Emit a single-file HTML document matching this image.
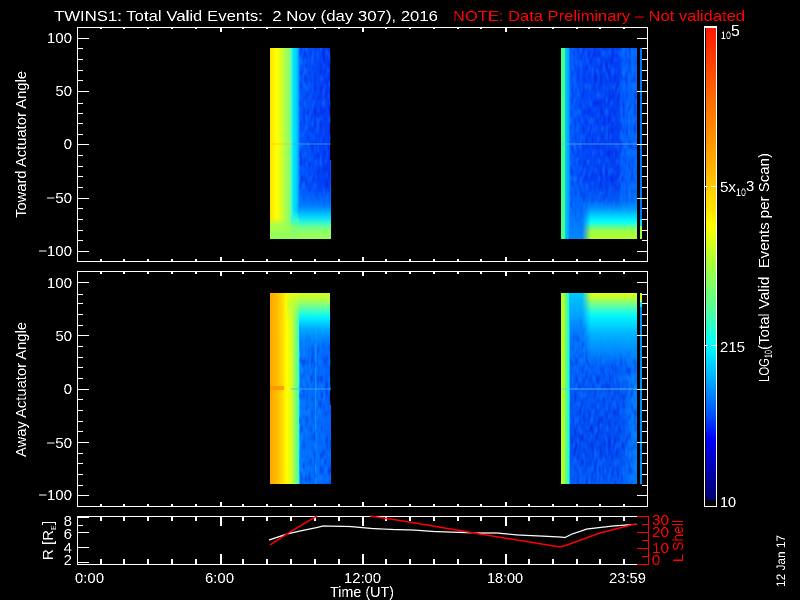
<!DOCTYPE html>
<html>
<head>
<meta charset="utf-8">
<style>
html,body{margin:0;padding:0;background:#000;width:800px;height:600px;overflow:hidden}
svg{display:block}
text{font-family:"Liberation Sans",sans-serif;fill:#fff;font-size:15px}
.r{fill:#f00}
.s{font-size:11px}
</style>
</head>
<body>
<svg width="800" height="600" viewBox="0 0 800 600" xmlns="http://www.w3.org/2000/svg">
<defs>
<filter id="aa" x="0" y="0" width="800" height="600" filterUnits="userSpaceOnUse" color-interpolation-filters="sRGB">
<feComponentTransfer><feFuncA type="discrete" tableValues="0 1"/></feComponentTransfer>
</filter>
<filter id="nd" x="0" y="0" width="1" height="1" color-interpolation-filters="sRGB">
<feTurbulence type="fractalNoise" baseFrequency=".35 .12" numOctaves="1" seed="4"/>
<feColorMatrix values="0 0 0 0 0  0 0 0 0 0  0 0 0 0 .8  1.2 0 0 0 -.55"/>
</filter>
<filter id="nl" x="0" y="0" width="1" height="1" color-interpolation-filters="sRGB">
<feTurbulence type="fractalNoise" baseFrequency=".35 .12" numOctaves="1" seed="11"/>
<feColorMatrix values="0 0 0 0 .1  0 0 0 0 .6  0 0 0 0 1  1 0 0 0 -.47"/>
</filter>

<linearGradient id="a1" x1="0" x2="1" y1="0" y2="0">
<stop offset="0" stop-color="#ffe000"/><stop offset=".05" stop-color="#ffee00"/><stop offset=".09" stop-color="#ffff00"/><stop offset=".15" stop-color="#f0ff10"/><stop offset=".25" stop-color="#b0ff48"/><stop offset=".33" stop-color="#80ff80"/><stop offset=".367" stop-color="#40ffc0"/><stop offset=".38" stop-color="#00e8ff"/><stop offset=".45" stop-color="#00c8ff"/><stop offset=".483" stop-color="#0090ff"/><stop offset=".5" stop-color="#0058ff"/><stop offset=".75" stop-color="#0048fa"/><stop offset="1" stop-color="#0038f4"/>
</linearGradient>
<linearGradient id="a1v" x1="0" x2="0" y1="0" y2="1">
<stop offset="0" stop-color="#0070ff" stop-opacity="0"/><stop offset=".37" stop-color="#0080ff" stop-opacity=".85"/><stop offset=".555" stop-color="#00c8ff"/><stop offset=".667" stop-color="#20f0e8"/><stop offset=".76" stop-color="#60ffa0"/><stop offset=".87" stop-color="#90ff60"/><stop offset="1" stop-color="#98ff60"/>
</linearGradient>
<linearGradient id="a1c" x1="0" x2="0" y1="0" y2="1">
<stop offset="0" stop-color="#30ffd0" stop-opacity="0"/><stop offset=".35" stop-color="#30ffd0"/><stop offset=".62" stop-color="#80ff70"/><stop offset="1" stop-color="#90ff60"/>
</linearGradient>
<linearGradient id="a1l" x1="0" x2="0" y1="0" y2="1">
<stop offset="0" stop-color="#90ff60" stop-opacity="0"/><stop offset=".35" stop-color="#a0ff50" stop-opacity=".9"/><stop offset="1" stop-color="#90ff60"/>
</linearGradient>

<linearGradient id="a2" x1="0" x2="1" y1="0" y2="0">
<stop offset="0" stop-color="#40ff90"/><stop offset=".052" stop-color="#40ff90"/><stop offset=".06" stop-color="#00b8ff"/><stop offset=".095" stop-color="#00b0ff"/><stop offset=".125" stop-color="#0060ff"/><stop offset=".3" stop-color="#0048fa"/><stop offset=".76" stop-color="#0040f4"/><stop offset=".8" stop-color="#0060ff"/><stop offset="1" stop-color="#0068ff"/>
</linearGradient>
<linearGradient id="a2w" x1="0" x2="0" y1="0" y2="1">
<stop offset="0" stop-color="#0080ff" stop-opacity="0"/><stop offset="1" stop-color="#0088ff"/>
</linearGradient>
<linearGradient id="a2v" x1="0" x2="0" y1="0" y2="1">
<stop offset="0" stop-color="#00a0ff" stop-opacity="0"/><stop offset=".4" stop-color="#00d0ff"/><stop offset=".55" stop-color="#00ffff"/><stop offset=".67" stop-color="#50ffa8"/><stop offset=".8" stop-color="#a0ff40"/><stop offset="1" stop-color="#b0ff30"/>
</linearGradient>

<linearGradient id="b1" x1="0" x2="1" y1="0" y2="0">
<stop offset="0" stop-color="#ffa800"/><stop offset=".1" stop-color="#ffb800"/><stop offset=".2" stop-color="#ffd800"/><stop offset=".28" stop-color="#ffff00"/><stop offset=".36" stop-color="#d8ff20"/><stop offset=".4" stop-color="#a0ff50"/><stop offset=".45" stop-color="#60ff90"/><stop offset=".48" stop-color="#40ffb0"/><stop offset=".49" stop-color="#00c8ff"/><stop offset=".505" stop-color="#0078ff"/><stop offset=".75" stop-color="#0068ff"/><stop offset=".76" stop-color="#00a8ff"/><stop offset=".78" stop-color="#0070ff"/><stop offset="1" stop-color="#0060ff"/>
</linearGradient>
<linearGradient id="b1v" x1="0" x2="0" y1="0" y2="1">
<stop offset="0" stop-color="#d8ff20"/><stop offset=".08" stop-color="#c0ff38"/><stop offset=".2" stop-color="#80ff80"/><stop offset=".32" stop-color="#30ffd0"/><stop offset=".42" stop-color="#00f0ff"/><stop offset=".6" stop-color="#00b0ff" stop-opacity=".9"/><stop offset=".8" stop-color="#0090ff" stop-opacity=".6"/><stop offset="1" stop-color="#0080ff" stop-opacity="0"/>
</linearGradient>
<linearGradient id="b1c" x1="0" x2="0" y1="0" y2="1">
<stop offset="0" stop-color="#e8ff10"/><stop offset=".4" stop-color="#c0ff38" stop-opacity=".7"/><stop offset="1" stop-color="#a0ff50" stop-opacity="0"/>
</linearGradient>

<linearGradient id="b2" x1="0" x2="1" y1="0" y2="0">
<stop offset="0" stop-color="#b8ff28"/><stop offset=".05" stop-color="#b0ff30"/><stop offset=".06" stop-color="#50ff90"/><stop offset=".1" stop-color="#30ffb0"/><stop offset=".11" stop-color="#00d0ff"/><stop offset=".125" stop-color="#0078ff"/><stop offset=".8" stop-color="#0070ff"/><stop offset="1" stop-color="#0080ff"/>
</linearGradient>
<linearGradient id="b2d" x1="0" x2="0" y1="0" y2="1">
<stop offset="0" stop-color="#0040f0" stop-opacity="0"/><stop offset=".3" stop-color="#0040f0" stop-opacity=".15"/><stop offset=".48" stop-color="#0040f0" stop-opacity=".5"/><stop offset=".8" stop-color="#0040f0" stop-opacity=".8"/><stop offset="1" stop-color="#0040f0" stop-opacity=".45"/>
</linearGradient>
<linearGradient id="b2h" x1="0" x2="1" y1="0" y2="0">
<stop offset="0" stop-color="#fff"/><stop offset=".72" stop-color="#fff"/><stop offset=".95" stop-color="#fff" stop-opacity="0"/>
</linearGradient>
<mask id="b2m" maskUnits="userSpaceOnUse" x="570" y="293" width="67" height="191"><rect x="570" y="293" width="67" height="191" fill="url(#b2h)"/></mask>
<linearGradient id="fd" x1="0" x2="1" y1="0" y2="0">
<stop offset="0" stop-color="#fff" stop-opacity="0"/><stop offset=".16" stop-color="#fff"/><stop offset="1" stop-color="#fff"/>
</linearGradient>
<mask id="fm" maskUnits="userSpaceOnUse" x="582" y="0" width="55" height="600"><rect x="582" y="0" width="55" height="600" fill="url(#fd)"/></mask>
<linearGradient id="b2v" x1="0" x2="0" y1="0" y2="1">
<stop offset="0" stop-color="#e0ff18"/><stop offset=".05" stop-color="#c8ff28"/><stop offset=".14" stop-color="#80ff80"/><stop offset=".24" stop-color="#30ffd0"/><stop offset=".33" stop-color="#00f4ff"/><stop offset=".55" stop-color="#00b8ff"/><stop offset=".78" stop-color="#0098ff" stop-opacity=".8"/><stop offset="1" stop-color="#0090ff" stop-opacity="0"/>
</linearGradient>
<linearGradient id="b2l" x1="0" x2="0" y1="0" y2="1">
<stop offset="0" stop-color="#00c8ff"/><stop offset=".45" stop-color="#00b0ff" stop-opacity=".8"/><stop offset="1" stop-color="#0088ff" stop-opacity="0"/>
</linearGradient>
<linearGradient id="cb" x1="0" x2="0" y1="0" y2="1">
<stop offset="0" stop-color="#ff1800"/><stop offset=".16" stop-color="#ff7000"/><stop offset=".28" stop-color="#ffa800"/><stop offset=".32" stop-color="#ffc000"/><stop offset=".39" stop-color="#ffe800"/><stop offset=".42" stop-color="#ffff00"/><stop offset=".49" stop-color="#b0ff30"/><stop offset=".6" stop-color="#50ffa0"/><stop offset=".67" stop-color="#00ffff"/><stop offset=".74" stop-color="#00b0ff"/><stop offset=".82" stop-color="#0050ff"/><stop offset=".87" stop-color="#0000f8"/><stop offset=".95" stop-color="#0000a0"/><stop offset="1" stop-color="#000070"/>
</linearGradient>
</defs>

<!-- Panel 1 left block -->
<rect x="270" y="48" width="60" height="191" fill="url(#a1)"/>
<rect x="330" y="160" width="1" height="79" fill="#0050f8"/>
<rect x="299" y="48" width="32" height="191" filter="url(#nd)"/>
<rect x="299" y="48" width="32" height="191" filter="url(#nl)"/>
<rect x="299" y="185" width="32" height="54" fill="url(#a1v)"/>
<rect x="291" y="210" width="8" height="29" fill="url(#a1c)"/>
<rect x="270" y="218" width="21" height="21" fill="url(#a1l)"/>
<rect x="270" y="143" width="21" height="2" fill="#ffc000" opacity=".35"/>
<rect x="291" y="143" width="40" height="2" fill="#40b0ff" opacity=".35"/>

<!-- Panel 1 right block -->
<rect x="561" y="48" width="76" height="191" fill="url(#a2)"/>
<rect x="570" y="48" width="67" height="191" filter="url(#nd)"/>
<rect x="570" y="48" width="67" height="191" filter="url(#nl)"/>
<rect x="570" y="180" width="67" height="59" fill="url(#a2w)"/>
<rect x="582" y="200" width="55" height="39" fill="url(#a2v)" mask="url(#fm)"/>
<rect x="561" y="143" width="76" height="2" fill="#60b0ff" opacity=".35"/>
<rect x="640" y="48" width="2" height="171" fill="#0078ff"/>
<rect x="640" y="219" width="2" height="7" fill="#00e0ff"/>
<rect x="640" y="226" width="2" height="13" fill="#a0ff40"/>

<!-- Panel 2 left block -->
<rect x="270" y="293" width="60" height="191" fill="url(#b1)"/>
<rect x="330" y="405" width="1" height="79" fill="#0060ff"/>
<rect x="299" y="293" width="32" height="191" filter="url(#nd)"/>
<rect x="299" y="293" width="32" height="191" filter="url(#nl)"/>
<rect x="299" y="293" width="31" height="60" fill="url(#b1v)"/>
<rect x="287" y="293" width="12" height="30" fill="url(#b1c)"/>
<rect x="270" y="386" width="14" height="4" fill="#ff9000" opacity=".8"/>
<rect x="291" y="388" width="40" height="2" fill="#40b0ff" opacity=".4"/>

<!-- Panel 2 right block -->
<rect x="561" y="293" width="76" height="191" fill="url(#b2)"/>
<rect x="570" y="293" width="67" height="191" fill="url(#b2d)" mask="url(#b2m)"/>
<rect x="570" y="293" width="67" height="191" filter="url(#nd)"/>
<rect x="570" y="293" width="67" height="191" filter="url(#nl)"/>
<rect x="570" y="293" width="20" height="50" fill="url(#b2l)"/>
<rect x="582" y="293" width="55" height="72" fill="url(#b2v)" mask="url(#fm)"/>
<rect x="561" y="388" width="76" height="2" fill="#60c0ff" opacity=".4"/>
<rect x="640" y="293" width="2" height="9" fill="#c0ff30"/>
<rect x="640" y="302" width="2" height="5" fill="#00e8ff"/>
<rect x="640" y="307" width="2" height="177" fill="#0090ff"/>

<!-- Frames and ticks -->
<g shape-rendering="crispEdges" stroke="#fff" stroke-width="1" fill="none">
<rect x="77.5" y="27.5" width="570" height="234"/>
<rect x="77.5" y="271.5" width="570" height="235"/>
<path d="M77.5 564.5H648M77.5 516.5H637M77.5 516V565"/>
<path d="M77 38.5h12M77 91.5h12M77 144.5h12M77 198.5h12M77 251.5h12"/>
<path d="M77 48.5h6M77 59.5h6M77 70.5h6M77 80.5h6M77 103.5h6M77 113.5h6M77 123.5h6M77 134.5h6M77 155.5h6M77 166.5h6M77 176.5h6M77 187.5h6M77 208.5h6M77 219.5h6M77 230.5h6M77 240.5h6"/>
<path d="M637 38.5h11M637 91.5h11M637 144.5h11M637 198.5h11M637 251.5h11"/>
<path d="M642 48.5h6M642 59.5h6M642 70.5h6M642 80.5h6M642 103.5h6M642 113.5h6M642 123.5h6M642 134.5h6M642 155.5h6M642 166.5h6M642 176.5h6M642 187.5h6M642 208.5h6M642 219.5h6M642 230.5h6M642 240.5h6"/>
<path d="M77 282.5h12M77 335.5h12M77 389.5h12M77 442.5h12M77 495.5h12"/>
<path d="M77 294.5h6M77 303.5h6M77 314.5h6M77 325.5h6M77 346.5h6M77 357.5h6M77 367.5h6M77 378.5h6M77 399.5h6M77 410.5h6M77 421.5h6M77 431.5h6M77 453.5h6M77 463.5h6M77 474.5h6M77 485.5h6"/>
<path d="M637 282.5h11M637 335.5h11M637 389.5h11M637 442.5h11M637 495.5h11"/>
<path d="M642 294.5h6M642 303.5h6M642 314.5h6M642 325.5h6M642 346.5h6M642 357.5h6M642 367.5h6M642 378.5h6M642 399.5h6M642 410.5h6M642 421.5h6M642 431.5h6M642 453.5h6M642 463.5h6M642 474.5h6M642 485.5h6"/>
<path d="M77 517.5h12M77 532.5h12M77 547.5h12M77 562.5h12M77 525.5h6"/>
</g>
<g shape-rendering="crispEdges" fill="#fff">
<rect x="220" y="27" width="2" height="5"/><rect x="362" y="27" width="2" height="5"/><rect x="505" y="27" width="2" height="5"/>
<rect x="220" y="257" width="2" height="5"/><rect x="362" y="257" width="2" height="5"/><rect x="505" y="257" width="2" height="5"/>
<rect x="220" y="271" width="2" height="5"/><rect x="362" y="271" width="2" height="5"/><rect x="505" y="271" width="2" height="5"/>
<rect x="220" y="502" width="2" height="5"/><rect x="362" y="502" width="2" height="5"/><rect x="505" y="502" width="2" height="5"/>
<rect x="220" y="516" width="2" height="10"/><rect x="362" y="516" width="2" height="10"/><rect x="505" y="516" width="2" height="10"/>
<rect x="220" y="554" width="2" height="10"/><rect x="362" y="554" width="2" height="10"/><rect x="505" y="554" width="2" height="10"/>
</g>
<g shape-rendering="crispEdges" stroke="#fff" stroke-width="2" fill="none">
<path d="M101 27v2M124 27v2M148 27v2M172 27v2M196 27v2M243 27v2M267 27v2M291 27v2M315 27v2M339 27v2M386 27v2M410 27v2M434 27v2M458 27v2M481 27v2M529 27v2M553 27v2M577 27v2M600 27v2M624 27v2"/>
<path d="M101 259v2M124 259v2M148 259v2M172 259v2M196 259v2M243 259v2M267 259v2M291 259v2M315 259v2M339 259v2M386 259v2M410 259v2M434 259v2M458 259v2M481 259v2M529 259v2M553 259v2M577 259v2M600 259v2M624 259v2"/>
<path d="M101 271v3M124 271v3M148 271v3M172 271v3M196 271v3M243 271v3M267 271v3M291 271v3M315 271v3M339 271v3M386 271v3M410 271v3M434 271v3M458 271v3M481 271v3M529 271v3M553 271v3M577 271v3M600 271v3M624 271v3"/>
<path d="M101 504v2M124 504v2M148 504v2M172 504v2M196 504v2M243 504v2M267 504v2M291 504v2M315 504v2M339 504v2M386 504v2M410 504v2M434 504v2M458 504v2M481 504v2M529 504v2M553 504v2M577 504v2M600 504v2M624 504v2"/>
<path d="M101 516v5M124 516v5M148 516v5M172 516v5M196 516v5M243 516v5M267 516v5M291 516v5M315 516v5M339 516v5M386 516v5M410 516v5M434 516v5M458 516v5M481 516v5M529 516v5M553 516v5M577 516v5M600 516v5M624 516v5"/>
<path d="M101 559v5M124 559v5M148 559v5M172 559v5M196 559v5M243 559v5M267 559v5M291 559v5M315 559v5M339 559v5M386 559v5M410 559v5M434 559v5M458 559v5M481 559v5M529 559v5M553 559v5M577 559v5M600 559v5M624 559v5"/>
</g>

<g shape-rendering="crispEdges" stroke="#f00" stroke-width="1" fill="none">
<path d="M648.5 516V565M637 516.5h12M637 532.5h12M637 548.5h12M637 564.5h12M642 524.5h6M642 540.5h6M642 556.5h6"/>
</g>

<polyline fill="none" stroke="#fff" stroke-width="1.2" points="269,540 287,534 300,531 317,527.5 323,526 350,526.5 372,528.5 393,529.5 413,530 434,531.5 477,533 497,533 518,535 540,536 560,537 565,537.5 572,534 587,529 613,526 633,524.5 637,524"/>
<polyline fill="none" stroke="#f00" stroke-width="1.5" points="270,545 290,532 317,516"/>
<polyline fill="none" stroke="#f00" stroke-width="1.5" points="370,516 400,520.5 433,526 477,533.5 517,540 560,547 567,545 600,533 633,524.5 637,524"/>

<rect x="706" y="28" width="10" height="472" fill="url(#cb)"/>
<g shape-rendering="crispEdges" fill="#fff">
<rect x="704" y="26" width="1" height="481"/>
<rect x="716" y="26" width="1" height="481"/>
<rect x="704" y="26" width="13" height="2"/>
<rect x="704" y="506" width="13" height="1"/>
<rect x="705" y="186" width="3" height="1"/><rect x="711" y="186" width="5" height="1"/>
<rect x="705" y="345" width="3" height="1"/><rect x="711" y="345" width="5" height="1"/>
</g>

<g filter="url(#aa)">
<text x="54" y="21" textLength="384" lengthAdjust="spacingAndGlyphs" xml:space="preserve">TWINS1: Total Valid Events:  2 Nov (day 307), 2016</text>
<text class="r" x="453" y="21" textLength="292" lengthAdjust="spacingAndGlyphs">NOTE: Data Preliminary – Not validated</text>

<g text-anchor="end">
<text x="72" y="43">100</text><text x="72" y="96">50</text><text x="72" y="149">0</text><text x="72" y="203">−50</text><text x="72" y="256">−100</text>
<text x="72" y="288">100</text><text x="72" y="341">50</text><text x="72" y="394">0</text><text x="72" y="448">−50</text><text x="72" y="500">−100</text>
<text x="72" y="526">8</text><text x="72" y="539">6</text><text x="72" y="553">4</text><text x="72" y="565">2</text>
</g>

<text transform="translate(26,218) rotate(-90)" textLength="147" lengthAdjust="spacingAndGlyphs">Toward Actuator Angle</text>
<text transform="translate(26,457) rotate(-90)" textLength="135" lengthAdjust="spacingAndGlyphs">Away Actuator Angle</text>
<text transform="translate(53,560) rotate(-90)" textLength="30" lengthAdjust="spacingAndGlyphs">R [R</text>
<text class="s" transform="translate(56,530) rotate(-90)" style="font-size:7px">E</text>
<text transform="translate(53,525) rotate(-90)">]</text>

<text class="r" x="652" y="525" textLength="17" lengthAdjust="spacingAndGlyphs">30</text>
<text class="r" x="652" y="537" textLength="17" lengthAdjust="spacingAndGlyphs">20</text>
<text class="r" x="652" y="553" textLength="17" lengthAdjust="spacingAndGlyphs">10</text>
<text class="r" x="652" y="565">0</text>
<text class="r" transform="translate(683,562) rotate(-90)" textLength="42" lengthAdjust="spacingAndGlyphs">L Shell</text>

<text x="75" y="583" textLength="29" lengthAdjust="spacingAndGlyphs">0:00</text>
<text x="205" y="583" textLength="29" lengthAdjust="spacingAndGlyphs">6:00</text>
<text x="344" y="583" textLength="37" lengthAdjust="spacingAndGlyphs">12:00</text>
<text x="487" y="583" textLength="36" lengthAdjust="spacingAndGlyphs">18:00</text>
<text x="609" y="583" textLength="37" lengthAdjust="spacingAndGlyphs">23:59</text>
<text x="330" y="597" textLength="64" lengthAdjust="spacingAndGlyphs">Time (UT)</text>

<text class="s" x="721" y="39" textLength="10" lengthAdjust="spacingAndGlyphs">10</text>
<text x="731" y="36" style="font-size:16px">5</text>
<text x="720" y="192" textLength="16" lengthAdjust="spacingAndGlyphs">5x</text>
<text class="s" x="736" y="196" textLength="10" lengthAdjust="spacingAndGlyphs">10</text>
<text x="746" y="191">3</text>
<text x="720" y="352" textLength="25" lengthAdjust="spacingAndGlyphs">215</text>
<text x="720" y="507" textLength="16" lengthAdjust="spacingAndGlyphs">10</text>

<text transform="translate(769,382) rotate(-90)" textLength="24" lengthAdjust="spacingAndGlyphs">LOG</text>
<text class="s" transform="translate(772,358) rotate(-90)" textLength="8" lengthAdjust="spacingAndGlyphs">10</text>
<text transform="translate(769,350) rotate(-90)" textLength="197" lengthAdjust="spacingAndGlyphs" xml:space="preserve">(Total Valid  Events per Scan)</text>
<text transform="translate(785,587) rotate(-90)" style="font-size:12px" textLength="52" lengthAdjust="spacingAndGlyphs">12 Jan 17</text>
</g>
</svg>
</body>
</html>
